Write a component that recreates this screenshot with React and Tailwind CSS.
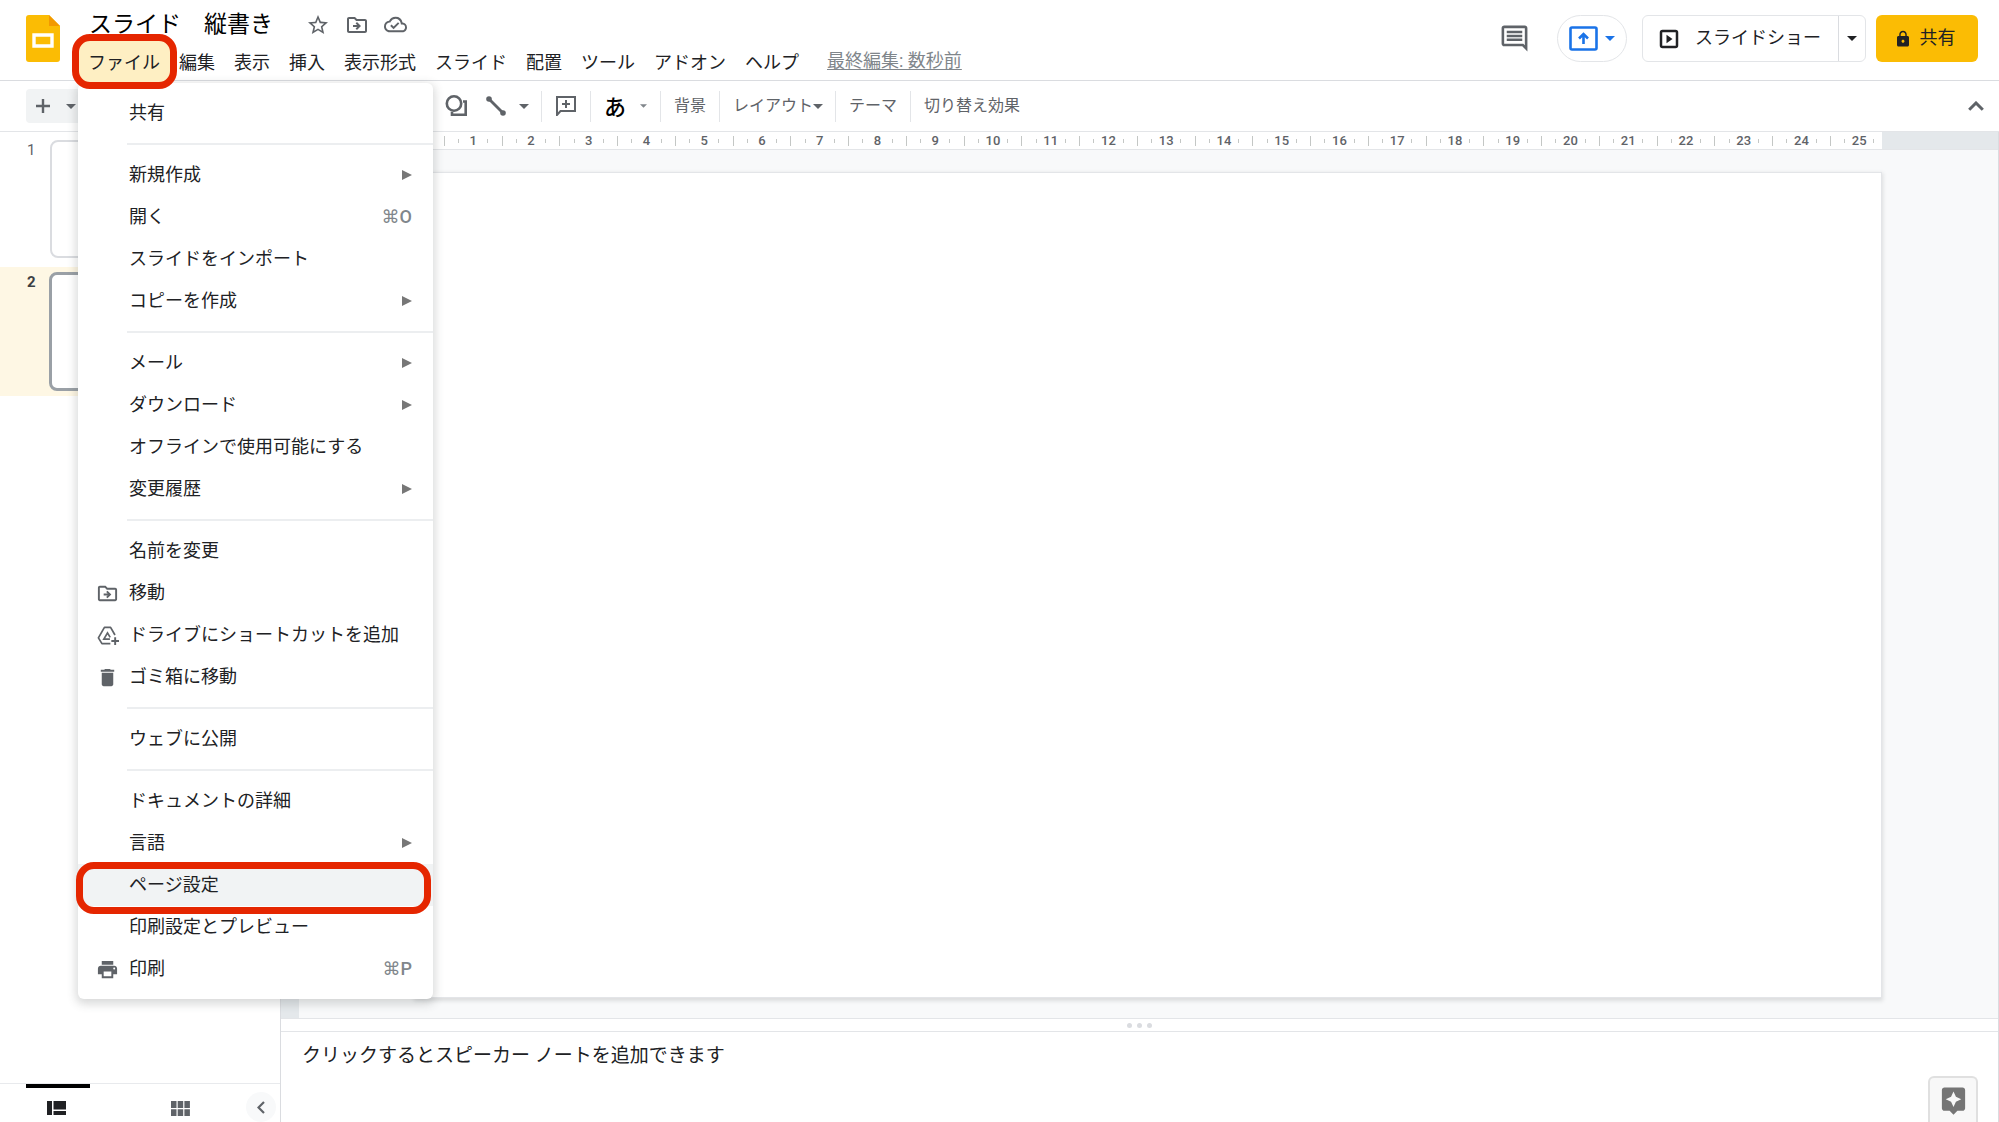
import React, { useState } from 'react';
import {
  MdStarBorder,
  MdOutlineDriveFileMove,
  MdOutlineCloudDone,
  MdOutlineInsertComment,
  MdLock,
  MdDelete,
  MdPrint,
  MdAssistant,
} from 'react-icons/md';

const MENUS = ['編集', '表示', '挿入', '表示形式', 'スライド', '配置', 'ツール', 'アドオン', 'ヘルプ'];

const DriveShortcutIcon = ({ className }) => (
  <svg className={className} viewBox="0 0 24 24" fill="none" stroke="currentColor" strokeWidth="1.800">
    <path d="M15 20.500H6.200L2.500 14.500 8.800 3.500h6.400l4.600 8" strokeLinejoin="round" />
    <path d="M14.500 15.800H8.200L12 9.300l2.800 4.700" />
    <path d="M20 13.800v8M16 17.800h8" strokeWidth="2" />
  </svg>
);

// ファイルメニューの項目（グループごとに区切り線を入れる）
const FILE_MENU = [
  [{ label: '共有' }],
  [
    { label: '新規作成', sub: true },
    { label: '開く', shortcut: '⌘O' },
    { label: 'スライドをインポート' },
    { label: 'コピーを作成', sub: true },
  ],
  [
    { label: 'メール', sub: true },
    { label: 'ダウンロード', sub: true },
    { label: 'オフラインで使用可能にする' },
    { label: '変更履歴', sub: true },
  ],
  [
    { label: '名前を変更' },
    { label: '移動', icon: MdOutlineDriveFileMove },
    { label: 'ドライブにショートカットを追加', icon: DriveShortcutIcon },
    { label: 'ゴミ箱に移動', icon: MdDelete },
  ],
  [{ label: 'ウェブに公開' }],
  [
    { label: 'ドキュメントの詳細' },
    { label: '言語', sub: true },
    { label: 'ページ設定', active: true },
    { label: '印刷設定とプレビュー' },
    { label: '印刷', icon: MdPrint, shortcut: '⌘P' },
  ],
];

// 16:9 のスライド幅は 25.4cm
const SLIDE_CM = 25.4;
const CM_MARKS = Array.from({ length: 25 }, (_, i) => i + 1);

const Caret = ({ className = 'w-[10px] h-[5px]' }) => (
  <svg className={className} viewBox="0 0 10 5" fill="currentColor">
    <path d="M0 0h10L5 5z" />
  </svg>
);

const Separator = () => <div className="w-px h-[31px] bg-[#e3e5e8] shrink-0" />;

const SlidesLogo = () => (
  <svg className="w-[34px] h-[47px] shrink-0" viewBox="0 0 34 47">
    <path d="M3 0h20l11 11v33a3 3 0 0 1-3 3H3a3 3 0 0 1-3-3V3a3 3 0 0 1 3-3z" fill="#fbbc04" />
    <path d="M23 0l11 11H23z" fill="#f29900" />
    <path d="M8 20h18v11H8z" fill="none" stroke="#fff" strokeWidth="3.4" />
  </svg>
);

const MenuItem = ({ item }) => {
  const Icon = item.icon;
  return (
    <li className="relative">
      <button
        className={`w-full h-[42px] pl-[19px] pr-[21px] flex items-center text-left ${item.active ? 'bg-[#f1f3f4]' : 'hover:bg-[#f1f3f4]'}`}
      >
        <span className="w-8 shrink-0 text-[#5f6368]">
          {Icon && <Icon className="w-[23px] h-[23px] -ml-px" />}
        </span>
        <span className="flex-1 whitespace-nowrap">{item.label}</span>
        {item.shortcut && (
          <span className="font-['Roboto','DejaVu_Sans',sans-serif] font-medium text-[#80868b]">{item.shortcut}</span>
        )}
        {item.sub && (
          <svg className="w-[10px] h-[10px] text-[#777]" viewBox="0 0 10 10" fill="currentColor">
            <path d="M0 0l10 5-10 5z" />
          </svg>
        )}
      </button>
      {item.active && (
        <span className="absolute -left-[2px] right-[2px] -top-[2px] -bottom-[8px] border-[7px] border-[#e52600] rounded-[18px] pointer-events-none" />
      )}
    </li>
  );
};

const FileMenu = () => (
  <ul className="absolute z-20 left-[-10px] top-[38px] w-[355px] pt-[9px] pb-[9px] bg-white rounded-md shadow-[0_3px_10px_2px_rgba(60,64,67,0.2)] text-[18px] text-[#202124]">
    {FILE_MENU.map((group, i) => (
      <React.Fragment key={i}>
        {i > 0 && <li className="ml-[49px] my-[9px] border-t-2 border-[#eceef0]" />}
        {group.map((item) => (
          <MenuItem key={item.label} item={item} />
        ))}
      </React.Fragment>
    ))}
  </ul>
);

const Header = ({ menuOpen, onToggleMenu }) => {
  const [title, setTitle] = useState('スライド　縦書き');

  return (
    <header className="h-[81px] shrink-0 border-b border-[#dadce0] flex justify-between pl-[26px] pr-[21px]">
      <div className="flex">
        <div className="pt-[15px]">
          <SlidesLogo />
        </div>
        <div className="ml-7">
          <div className="flex items-center h-7 mt-[11px]">
            <input
              aria-label="タイトル"
              value={title}
              onChange={(e) => setTitle(e.target.value)}
              className="w-[190px] h-7 pl-px text-[23px] leading-7 text-black outline-none"
            />
            <div className="flex ml-5 text-[#5f6368]">
              <button className="w-[39px] flex justify-center" aria-label="スター">
                <MdStarBorder className="w-6 h-6" />
              </button>
              <button className="w-[39px] flex justify-center" aria-label="移動">
                <MdOutlineDriveFileMove className="w-6 h-6" />
              </button>
              <button className="w-[39px] flex justify-center" aria-label="保存状態">
                <MdOutlineCloudDone className="w-[23px] h-[23px]" />
              </button>
            </div>
          </div>
          <nav className="flex items-center gap-[19px] h-9 mt-[6px] text-[18px] leading-9 text-[#202124]">
            <div className="relative">
              <span className="absolute z-30 -left-4 -right-[17px] -top-[11px] -bottom-[8px] border-[7px] border-[#e52600] bg-[#feefc3] rounded-[18px] pointer-events-none" />
              <button className="relative z-30 block" onClick={onToggleMenu}>ファイル</button>
              {menuOpen && <FileMenu />}
            </div>
            {MENUS.map((m) => (
              <button key={m}>{m}</button>
            ))}
            <a href="#history" className="ml-[9px] pb-1 text-[#80868b] underline underline-offset-2">
              最終編集: 数秒前
            </a>
          </nav>
        </div>
      </div>

      <div className="flex items-start pt-[15px] text-[18px] text-[#202124]">
        <button className="h-[47px] flex items-center mr-[27px] text-[#5f6368]" aria-label="コメント">
          <MdOutlineInsertComment className="w-[31px] h-[31px]" />
        </button>
        <button
          className="w-[70px] h-[47px] mr-[15px] flex items-center justify-center gap-[7px] border border-[#e3e5e8] rounded-full text-[#1a73e8]"
          aria-label="画面を共有"
        >
          <svg className="w-[29px] h-[25px]" viewBox="0 0 29 25" fill="none" stroke="currentColor">
            <rect x="1.5" y="1.5" width="26" height="22" rx="1.5" strokeWidth="2.600" />
            <path d="M14.500 18V9M10 12.500l4.500-4.500 4.500 4.500" strokeWidth="2.600" />
          </svg>
          <Caret />
        </button>
        <div className="flex h-[47px] mr-[10px] border border-[#e3e5e8] rounded-md">
          <button className="flex items-center pl-4 pr-[17px] gap-4">
            <svg className="w-5 h-5" viewBox="0 0 20 20">
              <rect x="2" y="2" width="16" height="16" rx="1.500" fill="none" stroke="currentColor" strokeWidth="2.500" />
              <path d="M7.500 5.800v8.400l6-4.200z" fill="currentColor" />
            </svg>
            <span className="pb-[3px]">スライドショー</span>
          </button>
          <button className="w-[27px] flex items-center justify-center border-l border-[#dadce0]" aria-label="スライドショーのオプション">
            <Caret />
          </button>
        </div>
        <button className="h-[47px] w-[102px] pr-[5px] flex items-center justify-center gap-2 bg-[#fbbc04] rounded-md">
          <MdLock className="w-[18px] h-[18px]" />
          <span className="pb-[3px]">共有</span>
        </button>
      </div>
    </header>
  );
};

const Toolbar = () => (
  <div className="h-[51px] shrink-0 border-b border-[#e3e5e8] flex items-center justify-between pl-[26px] pr-[15px] text-[16px] text-[#5f6368]">
    <div className="flex items-center">
      <div className="flex items-center h-[34px] w-[58px] pl-[10px] gap-4 bg-[#f1f3f4] rounded-sm mr-[361px]">
        <svg className="w-[14px] h-[14px]" viewBox="0 0 14 14" stroke="currentColor" strokeWidth="2.400">
          <path d="M7 0v14M0 7h14" />
        </svg>
        <Caret />
      </div>
      <button aria-label="図形">
        <svg className="w-[23px] h-[22px]" viewBox="0 0 23 22" fill="none" stroke="currentColor" strokeWidth="2.600">
          <circle cx="9" cy="8.500" r="7.200" />
          <path d="M18 6.500h2.700v13.200H7v-3" />
        </svg>
      </button>
      <button className="ml-[18px]" aria-label="線">
        <svg className="w-5 h-5" viewBox="0 0 20 20">
          <path d="M3 3l14 14" stroke="currentColor" strokeWidth="2.800" />
          <circle cx="3" cy="3" r="2.800" fill="currentColor" />
          <circle cx="17" cy="17" r="2.800" fill="currentColor" />
        </svg>
      </button>
      <button className="ml-[13px] mr-3" aria-label="線の種類">
        <Caret />
      </button>
      <Separator />
      <button className="mx-[14px]" aria-label="コメントを追加">
        <svg className="w-5 h-5" viewBox="0 0 20 20" fill="none" stroke="currentColor" strokeWidth="2">
          <path d="M1 19V1h18v14H4.500z" />
          <path d="M10 4v8M6 8h8" />
        </svg>
      </button>
      <Separator />
      <button className="ml-[13px] pt-1 text-[22px] leading-[34px] font-medium text-black">あ</button>
      <button className="ml-[14px] mr-[13px] text-[#80868b]" aria-label="入力ツール">
        <Caret className="w-[7px] h-1" />
      </button>
      <Separator />
      <button className="mx-[13px]">背景</button>
      <Separator />
      <button className="ml-[13px] mr-3 flex items-center">
        レイアウト
        <Caret />
      </button>
      <Separator />
      <button className="mx-[13px]">テーマ</button>
      <Separator />
      <button className="mx-[13px]">切り替え効果</button>
    </div>
    <button aria-label="メニューを隠す">
      <svg className="w-[16px] h-[10px]" viewBox="0 0 16 10" fill="none" stroke="currentColor" strokeWidth="3">
        <path d="M1.200 8.800L8 2l6.800 6.800" />
      </svg>
    </button>
  </div>
);

const Filmstrip = () => (
  <aside className="w-[281px] shrink-0 flex flex-col border-r border-[#dadce0]">
    <div className="flex-1">
      <div className="flex h-[135px] pt-2">
        <span className="w-[50px] pl-[27px] text-[15px] leading-5 text-[#5f6368]">1</span>
        <div className="w-[210px] h-[118px] bg-white border-2 border-[#dadce0] rounded-lg" />
      </div>
      <div className="flex h-[129px] pt-[5px] bg-[#fef7e4]">
        <span className="w-[49px] pl-[27px] text-[15px] leading-5 font-bold text-[#3c4043]">2</span>
        <div className="w-[211px] h-[119px] bg-white border-[3px] border-[#9aa0a6] rounded-lg" />
      </div>
    </div>
    <div className="h-[39px] flex items-start border-t border-[#e8eaed] text-[#5f6368]">
      <button
        className="ml-[26px] w-16 h-full pt-[13px] flex justify-center border-t-4 border-black text-[#202124] bg-white"
        aria-label="フィルムストリップ表示"
      >
        <svg className="w-[19px] h-[14px] -ml-1" viewBox="0 0 19 14" fill="currentColor">
          <path d="M0 0h5v14H0zM6.500 0H19v8.500H6.500zM6.500 10H19v4H6.500z" />
        </svg>
      </button>
      <button className="ml-[81px] pt-[17px]" aria-label="グリッド表示">
        <svg className="w-[19px] h-[15px]" viewBox="0 0 19 15" fill="currentColor">
          <path d="M0 0h5.500v7H0zM6.700 0h5.500v7H6.700zM13.400 0h5.500v7h-5.500zM0 8.200h5.500V15H0zM6.700 8.200h5.500V15H6.700zM13.400 8.200h5.500V15h-5.500z" />
        </svg>
      </button>
      <button
        className="ml-auto mr-1 mt-2 w-[30px] h-[30px] rounded-full bg-[#f8f9fa] flex items-center justify-center"
        aria-label="サイドパネルを閉じる"
      >
        <svg className="w-2 h-[13px]" viewBox="0 0 8 13" fill="none" stroke="currentColor" strokeWidth="2.200">
          <path d="M7 1L1.500 6.500 7 12" />
        </svg>
      </button>
    </div>
  </aside>
);

const Ruler = () => (
  <div className="h-[18px] shrink-0 flex border-b border-[#e3e5e8] bg-[#e4e8eb] px-[116px]">
    <div className="ml-[18px] flex-1 flex items-center bg-white overflow-hidden font-[Roboto] text-[13px] leading-4 font-medium text-[#5f6368]">
      <div className="shrink-0" style={{ width: `${50 / SLIDE_CM}%` }} />
      {CM_MARKS.map((n) => (
        <div
          key={n}
          className="shrink-0 h-[10px] flex items-center border-l border-[#c4c7c5]"
          style={{ width: `${100 / SLIDE_CM}%` }}
        >
          <span className="w-1/4 h-1 border-r border-[#c4c7c5]" />
          <span className="w-1/2 text-center">{n}</span>
          <span className="w-1/4 h-1 border-l border-[#c4c7c5]" />
        </div>
      ))}
    </div>
  </div>
);

const Editor = () => (
  <main className="flex-1 min-w-0 flex flex-col border-r border-[#dadce0]">
    <Ruler />
    <div className="flex-1 flex bg-[#f8f9fa]">
      <div className="w-[18px] bg-[#e4e8eb]" />
      <div className="flex-1 flex px-[116px] pt-[22px] pb-5">
        <div className="flex-1 bg-white border border-[#e3e5e8] shadow-[0_2px_4px_1px_rgba(60,64,67,0.15)]" />
      </div>
    </div>
    <div className="h-[14px] shrink-0 flex items-center justify-center gap-[5px] border-y border-[#e3e5e8]">
      <span className="w-[5px] h-[5px] rounded-full bg-[#dadce0]" />
      <span className="w-[5px] h-[5px] rounded-full bg-[#dadce0]" />
      <span className="w-[5px] h-[5px] rounded-full bg-[#dadce0]" />
    </div>
    <div className="h-[90px] shrink-0 flex items-end">
      <textarea
        aria-label="スピーカー ノート"
        defaultValue="クリックするとスピーカー ノートを追加できます"
        className="flex-1 h-full pl-[21px] pt-[10px] text-[19px] leading-7 text-[#202124] resize-none outline-none"
      />
      <button
        className="w-[50px] h-[46px] mr-5 flex justify-center pt-[7px] bg-[#f8f8f8] border-2 border-b-0 border-[#e0e0e0] rounded-t-md text-[#757575]"
        aria-label="データ探索"
      >
        <MdAssistant className="w-[31px] h-[31px]" />
      </button>
    </div>
  </main>
);

const App = () => {
  const [menuOpen, setMenuOpen] = useState(true);

  return (
    <div className="h-screen flex flex-col bg-white overflow-hidden font-['Roboto','Noto_Sans_CJK_JP',sans-serif]">
      <Header menuOpen={menuOpen} onToggleMenu={() => setMenuOpen((prev) => !prev)} />
      <Toolbar />
      <div className="flex-1 min-h-0 flex">
        <Filmstrip />
        <Editor />
      </div>
    </div>
  );
};

export default App;
